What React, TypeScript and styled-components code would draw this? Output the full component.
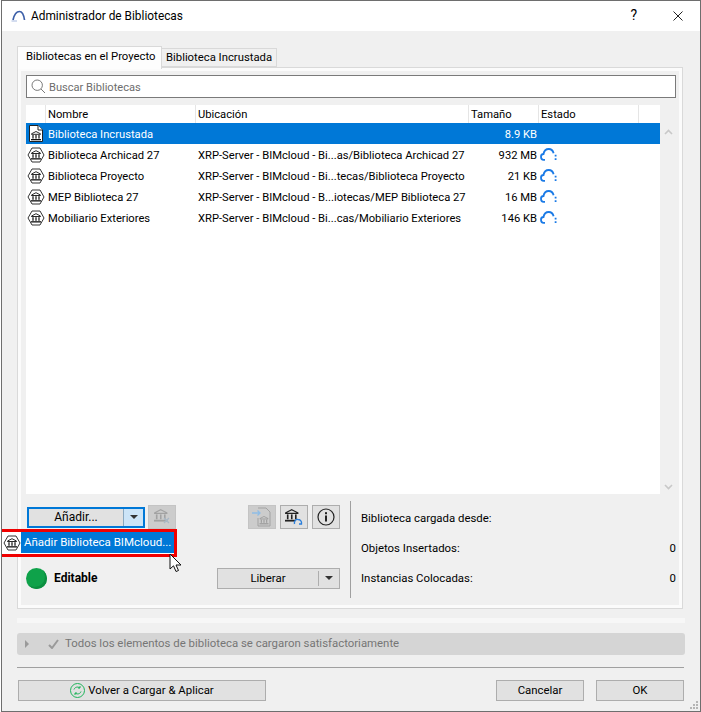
import styled, { createGlobalStyle } from "styled-components";

const GlobalStyle = createGlobalStyle`
  html, body {
    margin: 0;
    padding: 0;
    background: #fff;
  }
  body {
    font-family: Roboto, "Noto Sans", sans-serif;
    font-size: 11.4px;
    color: #000;
  }
`;

const libraries = [
  { name: "Biblioteca Archicad 27", path: "XRP-Server - BIMcloud - Bi...as/Biblioteca Archicad 27", size: "932 MB" },
  { name: "Biblioteca Proyecto", path: "XRP-Server - BIMcloud - Bi...tecas/Biblioteca Proyecto", size: "21 KB" },
  { name: "MEP Biblioteca 27", path: "XRP-Server - BIMcloud - B...iotecas/MEP Biblioteca 27", size: "16 MB" },
  { name: "Mobiliario Exteriores", path: "XRP-Server - BIMcloud - Bi...cas/Mobiliario Exteriores", size: "146 KB" },
];

const Window = styled.div`
  position: relative;
  box-sizing: border-box;
  width: 700px;
  height: 712px;
  margin-left: 1px;
  border: 1px solid #6e6e6e;
  background: #f0f0f0;
  overflow: hidden;
  line-height: 16px;
`;

const TitleBar = styled.div`
  height: 30px;
  background: #fff;
  display: flex;
  align-items: center;
  padding: 0 17px 0 9px;
`;

const TitleText = styled.span`
  margin-left: 5px;
  flex: 1;
  font-size: 11.85px;
`;

const HelpMark = styled.span`
  font-size: 14px;
  margin-right: 36px;
  margin-bottom: 2px;
`;

const Body = styled.div`
  padding: 15px 15px 0;
`;

const TabRow = styled.div`
  display: flex;
  align-items: flex-end;
  height: 21px;
`;

const Tab = styled.div<{ $active?: boolean }>`
  box-sizing: border-box;
  height: ${(p) => (p.$active ? "23px" : "19px")};
  margin-bottom: ${(p) => (p.$active ? "-2px" : "0")};
  padding: ${(p) => (p.$active ? "2px 0 0 8px" : "1px 0 0 4px")};
  width: ${(p) => (p.$active ? "145px" : "115px")};
  background: ${(p) => (p.$active ? "#fdfdfd" : "#f0f0f0")};
  border: 1px solid #d9d9d9;
  border-bottom: ${(p) => (p.$active ? "none" : "1px solid #d9d9d9")};
  border-left: ${(p) => (p.$active ? "1px solid #d9d9d9" : "none")};
  position: relative;
  z-index: 1;
  white-space: nowrap;
  font-size: 11.3px;
`;

const Panel = styled.div`
  box-sizing: border-box;
  height: 542px;
  margin-right: 2px;
  padding: 7px 6px 0 8px;
  border: 1px solid #d9d9d9;
  box-shadow: inset 0 0 0 3px #fbfbfb;
`;

const SearchBox = styled.div`
  box-sizing: border-box;
  height: 23px;
  background: #fff;
  border: 1px solid #7a7a7a;
  display: flex;
  align-items: center;
  padding-left: 4px;
  gap: 3px;
  color: #6d6d6d;
  font-size: 11.1px;
`;

const SearchLabel = styled.span`
  padding-top: 2px;
`;

const ListArea = styled.div`
  display: flex;
  height: 389px;
  margin-top: 7px;
`;

const List = styled.div`
  width: 634px;
  background: #fff;
  font-size: 11.2px;
`;

const Columns = `
  display: grid;
  grid-template-columns: 20px 150px 273px 70px 100px 21px;
`;

const HeaderRow = styled.div`
  ${Columns}
  height: 18px;
`;

const HeaderCell = styled.div`
  box-sizing: border-box;
  padding: 1px 0 0 2px;
  line-height: 17px;
  border-right: 1px solid #e5e5e5;
`;

const Row = styled.div<{ $selected?: boolean }>`
  ${Columns}
  height: 21px;
  align-items: center;
  background: ${(p) => (p.$selected ? "#0078d7" : "transparent")};
  color: ${(p) => (p.$selected ? "#fff" : "#000")};
`;

const IconCell = styled.div`
  display: flex;
  justify-content: center;
  align-items: center;
  height: 21px;
  color: #000;
`;

const Cell = styled.div`
  padding: 2px 0 0 2px;
  white-space: nowrap;
`;

const SizeCell = styled.div`
  text-align: right;
  padding: 2px 2px 0 0;
`;

const StatusCell = styled.div`
  display: flex;
  align-items: center;
  padding-left: 1px;
  height: 21px;
`;

const Scroller = styled.div`
  width: 16px;
  display: flex;
  flex-direction: column;
  justify-content: space-between;
  align-items: center;
  padding: 24px 0 4px;
  box-sizing: border-box;
`;

const Lower = styled.div`
  display: flex;
  padding-top: 7px;
`;

const LeftPane = styled.div`
  width: 324px;
  height: 97px;
  box-sizing: border-box;
  padding: 4px 0 0 1px;
`;

const Divider = styled.div`
  width: 1px;
  height: 97px;
  background: #a0a0a0;
`;

const RightPane = styled.div`
  flex: 1;
  padding: 9px 0 0 10px;
`;

const InfoRow = styled.div`
  display: flex;
  justify-content: space-between;
  height: 30px;
`;

const ToolRow = styled.div`
  display: flex;
  align-items: center;
  height: 24px;
`;

const SplitButton = styled.div`
  box-sizing: border-box;
  width: 118px;
  height: 21px;
  display: flex;
  border: 2px solid #0078d7;
  background: #e1e1e1;
`;

const SplitLabel = styled.div`
  flex: 1;
  text-align: center;
  line-height: 16px;
  font-size: 12px;
`;

const SplitArrow = styled.div`
  width: 19px;
  background: #cce4f7;
  border-left: 1px solid #8aa8c0;
  display: flex;
  align-items: center;
  justify-content: center;
`;

const Caret = styled.div`
  width: 0;
  height: 0;
  border-left: 4px solid transparent;
  border-right: 4px solid transparent;
  border-top: 4px solid #333;
`;

const IconButton = styled.div<{ $disabled?: boolean; $gap?: number }>`
  box-sizing: border-box;
  width: 28px;
  height: 24px;
  margin-left: ${(p) => p.$gap ?? 4}px;
  display: flex;
  align-items: center;
  justify-content: center;
  background: ${(p) => (p.$disabled ? "#cccccc" : "#e1e1e1")};
  border: 1px solid ${(p) => (p.$disabled ? "#c4c4c4" : "#adadad")};
`;

const StatusRow = styled.div`
  display: flex;
  align-items: center;
  margin-top: 38px;
  height: 22px;
`;

const StatusDot = styled.div`
  width: 21px;
  height: 21px;
  margin-left: -1px;
  border-radius: 50%;
  background: #0fa24a;
  box-shadow: inset -2px -2px 0 #0b8f40;
`;

const StatusLabel = styled.span`
  margin-left: 7px;
  font-weight: 700;
  font-size: 12px;
  flex: 1;
`;

const ReleaseButton = styled.div`
  box-sizing: border-box;
  width: 123px;
  height: 21px;
  margin-right: 10px;
  display: flex;
  align-items: center;
  background: #e1e1e1;
  border: 1px solid #adadad;
`;

const ReleaseLabel = styled.div`
  flex: 1;
  text-align: center;
`;

const ReleaseArrow = styled.div`
  width: 20px;
  height: 15px;
  display: flex;
  align-items: center;
  justify-content: center;
  border-left: 1px solid #adadad;
`;

const MessageStrip = styled.div`
  height: 5px;
  margin-top: 9px;
  background: #f7f7f7;
`;

const MessageBar = styled.div`
  height: 22px;
  margin-top: 10px;
  background: #d5d5d5;
  border-radius: 3px;
  display: flex;
  align-items: center;
  padding-left: 8px;
  color: #767676;
`;

const BarCaret = styled.div`
  width: 0;
  height: 0;
  border-top: 4px solid transparent;
  border-bottom: 4px solid transparent;
  border-left: 4px solid #9a9a9a;
  margin-right: 19px;
`;

const MessageText = styled.span`
  margin: 0 0 2px 6px;
`;

const Separator = styled.div`
  height: 1px;
  margin: 12px 1px 0 0;
  background: #a0a0a0;
`;

const Footer = styled.div`
  display: flex;
  margin: 12px 1px 0 1px;
`;

const FooterButton = styled.div<{ $width: number }>`
  box-sizing: border-box;
  width: ${(p) => p.$width}px;
  height: 21px;
  padding-bottom: 1px;
  display: flex;
  align-items: center;
  justify-content: center;
  gap: 3px;
  background: #e1e1e1;
  border: 1px solid #adadad;
`;

const Spacer = styled.div<{ $width?: number }>`
  flex: ${(p) => (p.$width ? `0 0 ${p.$width}px` : "1")};
`;

const Grip = styled.svg`
  position: absolute;
  right: 1px;
  bottom: 1px;
`;

const Popup = styled.div`
  position: absolute;
  left: -2px;
  top: 528px;
  box-sizing: border-box;
  width: 177px;
  height: 28px;
  border: 3px solid #f00000;
  border-left-width: 2px;
  background: #fff;
  display: flex;
`;

const PopupIcon = styled.div`
  width: 19px;
  display: flex;
  align-items: center;
  justify-content: center;
  background: #fff;
`;

const PopupItem = styled.div`
  flex: 1;
  height: 21px;
  padding-left: 3px;
  background: #0078d7;
  color: #fff;
  line-height: 20px;
  white-space: nowrap;
  font-size: 11.5px;
`;

const Pointer = styled.svg`
  position: absolute;
  left: 167px;
  top: 552px;
`;

const Temple = ({ x = 0, y = 0, s = 1, color = "currentColor" }: { x?: number; y?: number; s?: number; color?: string }) => (
  <g transform={`translate(${x} ${y}) scale(${s})`} fill={color}>
    <path d="M5 .5 L9.500 2.800 V3.300 H.5 V2.800 Z" fill="none" stroke={color} strokeWidth="0.9" />
    <rect x="1.4" y="4" width="1.2" height="3.6" />
    <rect x="4.4" y="4" width="1.2" height="3.6" />
    <rect x="7.4" y="4" width="1.2" height="3.6" />
    <rect x="0" y="8" width="10" height="1.3" />
  </g>
);

const HexIcon = () => (
  <svg width="18" height="16" viewBox="0 0 18 16">
    <path d="M5 1 H13 L17 8 L13 15 H5 L1 8 Z" fill="#fff" stroke="#333" strokeWidth="1" />
    <Temple x={4} y={3.2} color="#111" />
  </svg>
);

const DocIcon = () => (
  <svg width="14" height="17" viewBox="0 0 14 17">
    <path d="M.5.5 H9 L13.5 5 V16.5 H.5 Z" fill="#fff" stroke="#222" />
    <path d="M9 .5 V5 H13.5" fill="#fff" stroke="#222" />
    <Temple x={2} y={6} color="#111" />
  </svg>
);

const CloudIcon = () => (
  <svg width="17" height="13" viewBox="0 0 17 13" fill="none" stroke="#1a7ae6" strokeWidth="1.8">
    <path d="M5 11.800 H3.600 C1.800 11.800 1 10.200 1 8.800 C1 7 2.200 6 3.500 6 C4 3 6 1 8.800 1 C11.200 1 13 2.800 13.600 5.200" />
    <path d="M15.600 6.800 V8.600 M15.600 10.200 V12" />
  </svg>
);

const SearchIcon = () => (
  <svg width="15" height="15" viewBox="0 0 15 15" fill="none" stroke="#7a7a7a">
    <circle cx="6.2" cy="6.2" r="5.2" />
    <path d="M10 10 L14 14" />
  </svg>
);

const Chevron = ({ up }: { up?: boolean }) => (
  <svg width="9" height="6" viewBox="0 0 9 6" fill="none" stroke="#c8c8c8" strokeWidth="1.6">
    <path d={up ? "M1 5 L4.5 1.5 L8 5" : "M1 1 L4.5 4.5 L8 1"} />
  </svg>
);

const AppLogo = () => (
  <svg width="15" height="12" viewBox="0 0 15 12" fill="none">
    <path d="M2 10 C3 5.500 5.500 1.500 8.500 1.500 C11 1.500 12.800 5 13.500 10" stroke="#3c5fa8" strokeWidth="1.7" />
    <path d="M.5 11 H6" stroke="#c4d0ea" strokeWidth="1.500" />
  </svg>
);

export default function App() {
  return (
    <>
      <GlobalStyle />
      <Window>
        <TitleBar>
          <AppLogo />
          <TitleText>Administrador de Bibliotecas</TitleText>
          <HelpMark>?</HelpMark>
          <svg width="10" height="10" viewBox="0 0 10 10" stroke="#222">
            <path d="M.5 .5 L9.500 9.500 M9.500 .5 L.5 9.500" />
          </svg>
        </TitleBar>
        <Body>
          <TabRow>
            <Tab $active>Bibliotecas en el Proyecto</Tab>
            <Tab>Biblioteca Incrustada</Tab>
          </TabRow>
          <Panel>
            <SearchBox>
              <SearchIcon />
              <SearchLabel>Buscar Bibliotecas</SearchLabel>
            </SearchBox>
            <ListArea>
              <List>
                <HeaderRow>
                  <HeaderCell />
                  <HeaderCell>Nombre</HeaderCell>
                  <HeaderCell>Ubicación</HeaderCell>
                  <HeaderCell>Tamaño</HeaderCell>
                  <HeaderCell>Estado</HeaderCell>
                  <div />
                </HeaderRow>
                <Row $selected>
                  <IconCell>
                    <DocIcon />
                  </IconCell>
                  <Cell>Biblioteca Incrustada</Cell>
                  <Cell />
                  <SizeCell>8.9 KB</SizeCell>
                </Row>
                {libraries.map((lib) => (
                  <Row key={lib.name}>
                    <IconCell>
                      <HexIcon />
                    </IconCell>
                    <Cell>{lib.name}</Cell>
                    <Cell>{lib.path}</Cell>
                    <SizeCell>{lib.size}</SizeCell>
                    <StatusCell>
                      <CloudIcon />
                    </StatusCell>
                  </Row>
                ))}
              </List>
              <Scroller>
                <Chevron up />
                <Chevron />
              </Scroller>
            </ListArea>
            <Lower>
              <LeftPane>
                <ToolRow>
                  <SplitButton>
                    <SplitLabel>Añadir...</SplitLabel>
                    <SplitArrow>
                      <Caret />
                    </SplitArrow>
                  </SplitButton>
                  <IconButton $disabled $gap={3}>
                    <svg width="20" height="18" viewBox="0 0 20 18">
                      <Temple x={2} y={1} s={1.35} color="#a2a2a2" />
                      <path d="M12 10 L17 15 M17 10 L12 15" stroke="#a9b8c6" strokeWidth="1.3" />
                    </svg>
                  </IconButton>
                  <IconButton $disabled $gap={72}>
                    <svg width="20" height="20" viewBox="0 0 20 20" fill="none">
                      <path d="M6 1 H14 L18 5 V19 H6 V11" stroke="#a2a2a2" />
                      <Temple x={7.500} y={9} s={0.9} color="#9a9a9a" />
                      <path d="M0 6 H8 M5.500 3.500 L8 6 L5.500 8.500" stroke="#8fbde6" strokeWidth="1.300" />
                    </svg>
                  </IconButton>
                  <IconButton>
                    <svg width="20" height="18" viewBox="0 0 20 18" fill="none">
                      <Temple x={1} y={1} s={1.35} color="#222" />
                      <path d="M10.500 16 C9.800 13 12 11 14 11.500 C16 11.500 18 13 17.500 16 H15" stroke="#2a7fdc" strokeWidth="1.400" fill="#e1e1e1" />
                    </svg>
                  </IconButton>
                  <IconButton>
                    <svg width="18" height="18" viewBox="0 0 18 18" fill="none">
                      <circle cx="9" cy="9" r="8" stroke="#222" strokeWidth="1.200" />
                      <rect x="8" y="7.500" width="2" height="6" fill="#222" />
                      <rect x="8" y="4.200" width="2" height="2" fill="#222" />
                    </svg>
                  </IconButton>
                </ToolRow>
                <StatusRow>
                  <StatusDot />
                  <StatusLabel>Editable</StatusLabel>
                  <ReleaseButton>
                    <ReleaseLabel>Liberar</ReleaseLabel>
                    <ReleaseArrow>
                      <Caret />
                    </ReleaseArrow>
                  </ReleaseButton>
                </StatusRow>
              </LeftPane>
              <Divider />
              <RightPane>
                <InfoRow>
                  <span>Biblioteca cargada desde:</span>
                </InfoRow>
                <InfoRow>
                  <span>Objetos Insertados:</span>
                  <span>0</span>
                </InfoRow>
                <InfoRow>
                  <span>Instancias Colocadas:</span>
                  <span>0</span>
                </InfoRow>
              </RightPane>
            </Lower>
          </Panel>
          <MessageStrip />
          <MessageBar>
            <BarCaret />
            <svg width="11" height="10" viewBox="0 0 11 10" fill="none" stroke="#9a9a9a" strokeWidth="2">
              <path d="M1 6 L4 9 L10 1" />
            </svg>
            <MessageText>Todos los elementos de biblioteca se cargaron satisfactoriamente</MessageText>
          </MessageBar>
          <Separator />
          <Footer>
            <FooterButton $width={248}>
              <svg width="15" height="15" viewBox="0 0 15 15" fill="none" stroke="#1fb45a">
                <circle cx="7.500" cy="7.500" r="7" />
                <path d="M4 6.500 C4.500 4.500 7.500 3 10 5 M10 5 V3 M10 5 H8 M11 8.500 C10.500 10.500 7.500 12 5 10 M5 10 V12 M5 10 H7" />
              </svg>
              Volver a Cargar &amp; Aplicar
            </FooterButton>
            <Spacer />
            <FooterButton $width={88}>Cancelar</FooterButton>
            <Spacer $width={12} />
            <FooterButton $width={88}>OK</FooterButton>
          </Footer>
        </Body>
        <Popup>
          <PopupIcon>
            <HexIcon />
          </PopupIcon>
          <PopupItem>Añadir Biblioteca BIMcloud...</PopupItem>
        </Popup>
        <Pointer width="14" height="20" viewBox="0 0 14 20">
          <path d="M1 1 V16 L4.500 12.800 L7 18.500 L9.500 17.500 L7 12 H12 Z" fill="#fff" stroke="#111" />
        </Pointer>
        <Grip width="9" height="9" viewBox="0 0 9 9" fill="#b5b5b5">
          <rect x="6" y="0" width="2" height="2" />
          <rect x="3" y="3" width="2" height="2" />
          <rect x="6" y="3" width="2" height="2" />
          <rect x="0" y="6" width="2" height="2" />
          <rect x="3" y="6" width="2" height="2" />
          <rect x="6" y="6" width="2" height="2" />
        </Grip>
      </Window>
    </>
  );
}
